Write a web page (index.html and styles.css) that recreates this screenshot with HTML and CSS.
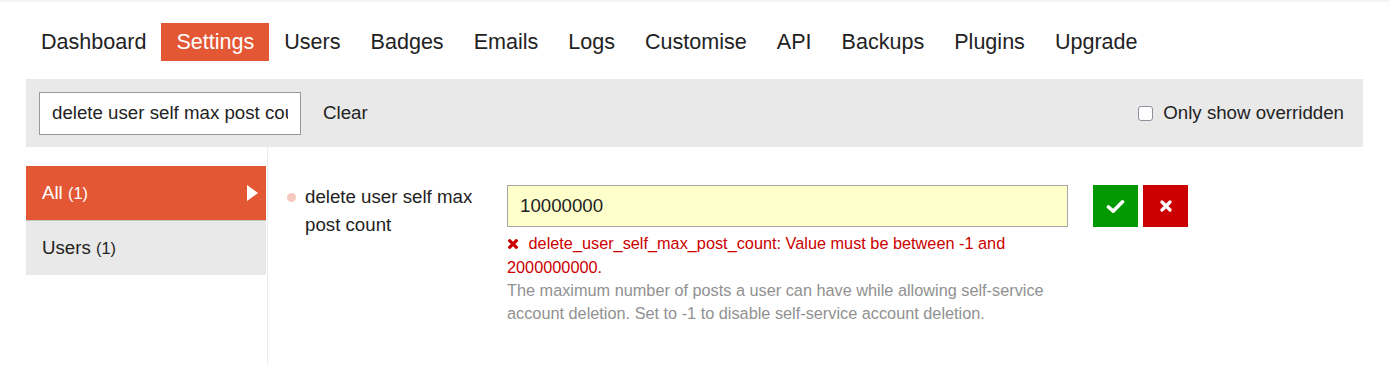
FILE: index.html
```html
<!DOCTYPE html>
<html lang="en">
<head>
    <meta charset="UTF-8">
    <meta name="viewport" content="width=device-width, initial-scale=1.0">
    <title>Admin - Settings</title>
    <link rel="stylesheet" href="styles.css">
</head>
<body>

    <div class="admin">
        <ul class="nav-pills">
            <li><a href="#">Dashboard</a></li>
            <li><a href="#" class="active">Settings</a></li>
            <li><a href="#">Users</a></li>
            <li><a href="#">Badges</a></li>
            <li><a href="#">Emails</a></li>
            <li><a href="#">Logs</a></li>
            <li><a href="#">Customise</a></li>
            <li><a href="#">API</a></li>
            <li><a href="#">Backups</a></li>
            <li><a href="#">Plugins</a></li>
            <li><a href="#">Upgrade</a></li>
        </ul>

        <div class="filter-bar">
            <input type="text" class="filter-input" value="delete user self max post count">
            <button class="clear-btn">Clear</button>
            <label class="overridden">
                <input type="checkbox">
                Only show overridden
            </label>
        </div>

        <div class="admin-body">
            <ul class="categories">
                <li class="active">
                    <a href="#">All <span class="count">(1)</span></a>
                    <span class="arrow"></span>
                </li>
                <li><a href="#">Users <span class="count">(1)</span></a></li>
            </ul>

            <div class="settings">
                <div class="setting">
                    <div class="setting-label">
                        <span class="dot"></span>
                        <h3>delete user self max post count</h3>
                    </div>
                    <div class="setting-value">
                        <input type="text" class="value-input" value="10000000">
                        <div class="error">
                            <svg class="error-icon" viewBox="0 0 10 10" width="10" height="10"><path d="M1.8 1.8 L8.2 8.2 M8.2 1.8 L1.8 8.2" stroke="#cc0000" stroke-width="3.2" stroke-linecap="square"/></svg>
                            delete_user_self_max_post_count: Value must be between -1 and 2000000000.
                        </div>
                        <div class="desc">The maximum number of posts a user can have while allowing self-service account deletion. Set to -1 to disable self-service account deletion.</div>
                    </div>
                    <div class="setting-controls">
                        <button class="btn ok">
                            <svg viewBox="0 0 20 16" width="19" height="15"><path d="M2.5 8.5 L7.5 13 L17.5 3" fill="none" stroke="#fff" stroke-width="3.8" stroke-linecap="round" stroke-linejoin="round"/></svg>
                        </button>
                        <button class="btn cancel">
                            <svg viewBox="0 0 12 12" width="12" height="12"><path d="M2 2 L10 10 M10 2 L2 10" stroke="#fff" stroke-width="3.2" stroke-linecap="round"/></svg>
                        </button>
                    </div>
                </div>
            </div>
        </div>
    </div>

</body>
</html>
```

FILE: styles.css
```css
body {
    font-family: 'Liberation Sans', Arial, sans-serif;
    font-size: 18.7px;
    color: #222;
    background-color: #fff;
    margin: 0;
    padding: 0;
    border-top: 2px solid #f6f6f6;
}

.admin {
    padding: 0 27px 0 26px;
}

/* top navigation */
.nav-pills {
    display: flex;
    list-style: none;
    margin: 21px 0 0;
    padding: 0;
}

.nav-pills a {
    display: block;
    padding: 0 15px;
    height: 38px;
    line-height: 38px;
    font-size: 21.55px;
    color: #222;
    text-decoration: none;
}

.nav-pills a.active {
    background-color: #e45735;
    color: #fff;
}

/* filter bar */
.filter-bar {
    display: flex;
    align-items: center;
    height: 68px;
    margin-top: 18px;
    padding: 0 19px 0 13px;
    background-color: #e9e9e9;
}

.filter-input {
    box-sizing: border-box;
    width: 262px;
    height: 43px;
    padding: 0 12px;
    border: 1px solid #999;
    font-family: inherit;
    font-size: 18.7px;
    color: #222;
    background: #fff;
    outline: none;
}

.clear-btn {
    margin-left: 10px;
    padding: 0 12px;
    border: none;
    background: none;
    font-family: inherit;
    font-size: 18.7px;
    color: #222;
    cursor: pointer;
}

.overridden {
    display: flex;
    align-items: center;
    margin-left: auto;
    color: #222;
}

.overridden input {
    appearance: none;
    -webkit-appearance: none;
    box-sizing: border-box;
    width: 15px;
    height: 15px;
    margin: 1px 10px 0 0;
    border: 1.5px solid #8f8f9d;
    border-radius: 3px;
    background: #fff;
}

/* body: categories + settings */
.admin-body {
    display: flex;
}

.categories {
    width: 240px;
    list-style: none;
    margin: 19px 0 0;
    padding: 0;
}

.categories li {
    position: relative;
    display: flex;
    align-items: center;
    height: 54px;
    background-color: #e9e9e9;
}

.categories li.active {
    background-color: #e45735;
    border-bottom: 1px solid #c4c4c4;
}

.categories a {
    padding-left: 16px;
    color: #222;
    text-decoration: none;
}

.categories li.active a {
    color: #fff;
}

.count {
    font-size: 16.3px;
}

.arrow {
    position: absolute;
    right: 8px;
    top: 19px;
    width: 0;
    height: 0;
    border-top: 8px solid transparent;
    border-bottom: 8px solid transparent;
    border-left: 11px solid #fff;
}

.settings {
    flex: 1;
    box-sizing: border-box;
    min-height: 218px;
    margin-left: 1px;
    padding: 36px 0 0 19px;
    border-left: 1px solid #ebebeb;
}

.setting {
    display: flex;
    align-items: flex-start;
}

.setting-label {
    display: flex;
    align-items: flex-start;
    width: 220px;
    flex-shrink: 0;
}

.dot {
    width: 9px;
    height: 9px;
    margin: 10px 9px 0 0;
    border-radius: 50%;
    background-color: #f7c8bd;
    flex-shrink: 0;
}

.setting-label h3 {
    margin: 0;
    width: 186px;
    font-size: 18.7px;
    font-weight: normal;
    line-height: 28px;
}

.setting-value {
    width: 561px;
    margin-top: 2px;
}

.value-input {
    box-sizing: border-box;
    width: 561px;
    height: 42px;
    padding: 0 12px;
    border: 1px solid #a6a6a6;
    background-color: #ffffcc;
    font-family: inherit;
    font-size: 18.7px;
    color: #222;
    outline: none;
}

.error {
    margin-top: 4px;
    font-size: 16.3px;
    line-height: 24px;
    color: #cc0000;
}

.error-icon {
    margin: 0 6px 0 1px;
}

.desc {
    font-size: 16.3px;
    line-height: 23px;
    color: #919191;
}

.setting-controls {
    display: flex;
    gap: 5px;
    margin: 2px 0 0 25px;
}

.btn {
    display: flex;
    align-items: center;
    justify-content: center;
    width: 45px;
    height: 42px;
    border: none;
    padding: 0;
    cursor: pointer;
}

.btn.ok {
    background-color: #009900;
}

.btn.cancel {
    background-color: #cc0000;
}
```
